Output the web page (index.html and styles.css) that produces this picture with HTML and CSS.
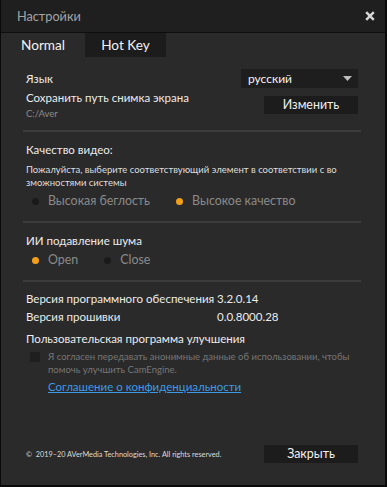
FILE: index.html
```html
<!DOCTYPE html>
<html lang="ru">
<head>
    <meta charset="UTF-8">
    <title>Настройки</title>
    <link rel="stylesheet" href="styles.css">
</head>
<body>
    <div class="window">
        <div class="titlebar">
            <div class="title">Настройки</div>
            <svg class="close-icon" width="10" height="10" viewBox="0 0 10 10">
                <path d="M1.2 1.2 L8.8 8.8 M8.8 1.2 L1.2 8.8" stroke="#d8d8d8" stroke-width="2.4"/>
            </svg>
        </div>

        <div class="tabs">
            <div class="tab">Normal</div>
            <div class="tab dark">Hot Key</div>
        </div>

        <div class="content">
            <section class="block first">
                <div class="row">
                    <span class="label">Язык</span>
                    <div class="select">
                        <span>русский</span>
                        <svg width="9" height="5" viewBox="0 0 9 5"><path d="M0 0 H9 L4.5 5 Z" fill="#bdbdbd"/></svg>
                    </div>
                </div>
                <div class="row path-row">
                    <div>
                        <div class="label">Сохранить путь снимка экрана</div>
                        <div class="path">C:/Aver</div>
                    </div>
                    <div class="btn">Изменить</div>
                </div>
            </section>

            <section class="block">
                <div class="label">Качество видео:</div>
                <p class="hint">Пожалуйста, выберите соответствующий элемент в соответствии с во зможностями системы</p>
                <div class="radios">
                    <div class="radio"><span class="dot"></span>Высокая беглость</div>
                    <div class="radio"><span class="dot on"></span>Высокое качество</div>
                </div>
            </section>

            <section class="block">
                <div class="label">ИИ подавление шума</div>
                <div class="radios">
                    <div class="radio"><span class="dot on"></span>Open</div>
                    <div class="radio"><span class="dot"></span>Close</div>
                </div>
            </section>

            <section class="block last">
                <div class="version"><span class="vname">Версия программного обеспечения</span><span>3.2.0.14</span></div>
                <div class="version"><span class="vname">Версия прошивки</span><span>0.0.8000.28</span></div>
                <div class="label program">Пользовательская программа улучшения</div>
                <div class="agree">
                    <span class="checkbox"></span>
                    <span>Я согласен передавать анонимные данные об использовании, чтобы помочь улучшить CamEngine.</span>
                </div>
                <a class="privacy" href="#">Соглашение о конфиденциальности</a>
            </section>
        </div>

        <div class="footer">
            <span class="copy">©&nbsp; 2019–20 AVerMedia Technologies, Inc. All rights reserved.</span>
            <div class="btn">Закрыть</div>
        </div>
    </div>
</body>
</html>
```

FILE: styles.css
```css
* {
    box-sizing: border-box;
}
body {
    margin: 0;
    padding: 0;
    background: #000;
    font-family: 'Lato', 'Open Sans', sans-serif;
    color: #e8e8e8;
}
.window {
    width: 387px;
    height: 487px;
    background-color: #2a2a2a;
    border-left: 1px solid #0a0a0a;
    border-right: 2px solid #0a0a0a;
    border-bottom: 2px solid #0a0a0a;
    display: flex;
    flex-direction: column;
}
.titlebar {
    height: 33px;
    flex: none;
    background-color: #1f1f1f;
    border-bottom: 1px solid #0e0e0e;
    display: flex;
    justify-content: space-between;
    align-items: center;
    padding: 0 10px 1px 16px;
}
.title {
    font-size: 12.7px;
    color: #a4a4a4;
}
.tabs {
    display: flex;
    height: 24px;
    flex: none;
}
.tab {
    padding: 0 20px;
    font-size: 13.6px;
    line-height: 24px;
    color: #f2f2f2;
    white-space: nowrap;
}
.tab.dark {
    background-color: #1c1c1c;
    width: 81px;
    padding: 0;
    text-align: center;
}
.content {
    padding: 0 24px 0 22px;
}
.block {
    border-bottom: 2px solid #3c3c3c;
    padding: 9px 3px 10px;
}
.block.first {
    padding-top: 12px;
    padding-bottom: 9px;
}
.block.last {
    border-bottom: none;
    padding-top: 8px;
}
.row {
    display: flex;
    justify-content: space-between;
    align-items: center;
}
.label {
    font-size: 11.5px;
    line-height: 18px;
    color: #ececec;
}
.select {
    width: 117px;
    height: 19px;
    background-color: #1e1e1e;
    display: flex;
    justify-content: space-between;
    align-items: center;
    padding: 0 6px 0 7px;
    font-size: 12px;
    color: #f4f4f4;
}
.path-row {
    align-items: flex-start;
    margin-top: 2px;
}
.path-row .label {
    line-height: 16px;
}
.path {
    margin-top: 1px;
    font-size: 9.5px;
    color: #8a8a8a;
    line-height: 14px;
}
.btn {
    width: 94px;
    height: 18px;
    background-color: #1c1c1c;
    font-size: 12.4px;
    line-height: 18px;
    text-align: center;
    color: #f0f0f0;
}
.path-row .btn {
    margin-top: 6px;
}
.hint {
    margin: 4px 0 0;
    font-size: 9.5px;
    line-height: 13px;
    color: #dedede;
}
.radios {
    display: flex;
    gap: 26px;
    margin-top: 2px;
    padding-left: 6px;
}
.block + .block .label + .radios {
    margin-top: 0;
}
.radio {
    display: flex;
    align-items: center;
    font-size: 12.4px;
    line-height: 20px;
    color: #8a8a8a;
}
.dot {
    width: 7px;
    height: 7px;
    border-radius: 50%;
    background-color: #1a1a1a;
    margin-right: 9px;
}
.dot.on {
    background-color: #f2a01a;
}
.version {
    display: flex;
    font-size: 11.5px;
    line-height: 18px;
    color: #ececec;
}
.vname {
    width: 191px;
}
.program {
    margin-top: 4px;
}
.agree {
    display: flex;
    margin-top: 2px;
    font-size: 9.5px;
    line-height: 13px;
    color: #767676;
}
.checkbox {
    flex: none;
    width: 10px;
    height: 10px;
    background-color: #1f1f1f;
    margin: 2px 8px 0 4px;
}
.privacy {
    display: block;
    margin: 3px 0 0 22px;
    font-size: 11.5px;
    line-height: 16px;
    color: #3b9be6;
}
.footer {
    margin-top: auto;
    display: flex;
    justify-content: space-between;
    align-items: center;
    padding: 0 27px 22px 25px;
}
.copy {
    font-size: 7.3px;
    color: #dcdcdc;
}
```
